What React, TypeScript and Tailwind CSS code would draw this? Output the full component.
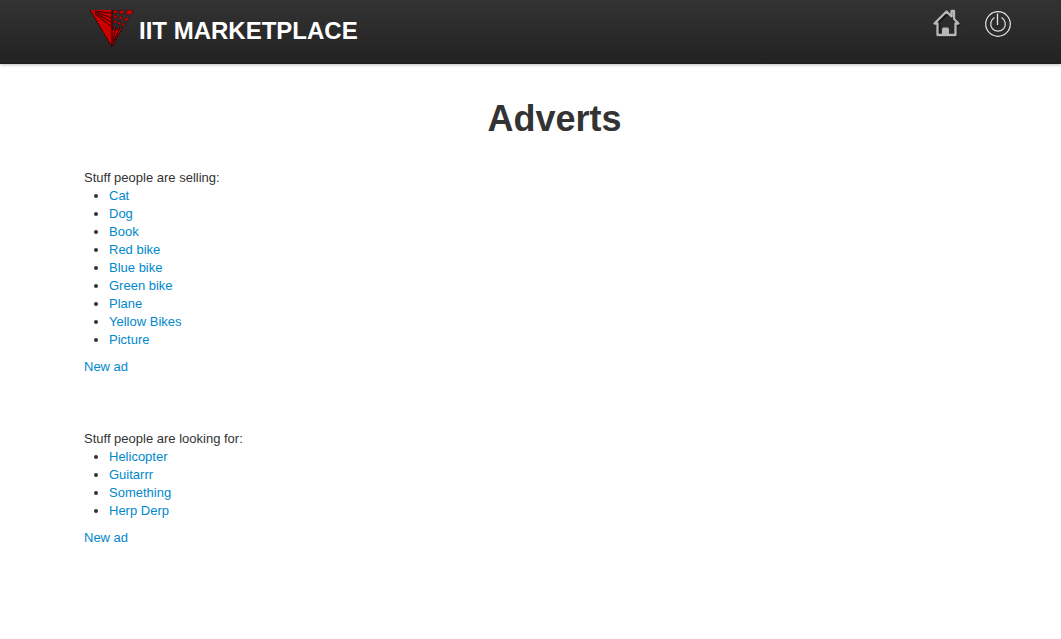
type Section = { title: string; items: string[] };

const sections: Section[] = [
  {
    title: "Stuff people are selling:",
    items: ["Cat", "Dog", "Book", "Red bike", "Blue bike", "Green bike", "Plane", "Yellow Bikes", "Picture"],
  },
  {
    title: "Stuff people are looking for:",
    items: ["Helicopter", "Guitarrr", "Something", "Herp Derp"],
  },
];

function Logo() {
  return (
    <svg width="44" height="38" viewBox="0 0 44 38" aria-hidden="true">
      <path d="M0 0H22V37Z" fill="#cc0000" />
      <path d="M22 20L30 19L32 18L22 37Z" fill="#cc0000" />
      <path d="M0 0L22 37L33 17" fill="none" stroke="#160000" strokeWidth="1" strokeDasharray="2 1" />
      <g stroke="#220000" strokeWidth="0.900" fill="none">
        <path d="M5 1L22 3.500M5 2L22 8M5 3L22 12.500M5 4L22 17" />
        <path d="M22 37V0" stroke="#4a0000" strokeWidth="1.500" />
        <path d="M23 32L25.500 18M24 31L30 18" />
      </g>
      <g fill="#d00000" stroke="#120000" strokeWidth="0.400">
        <path d="M23.500 0.300H27.500L27 3.200H23.500Z" />
        <path d="M30 0.300H34.500L33.300 3.700H29.500Z" />
        <path d="M37.500 0.300H43.500L40.500 4.700H35.700Z" />
        <path d="M24 5.300H27L26.500 8.200H24Z" />
        <path d="M29.500 6.300H32.500L31.500 9.500H28.500Z" />
        <path d="M35.500 7.800H39.300L37 11H34Z" />
        <path d="M24 10.500H26.500L26 13.500H24Z" />
        <path d="M29 11.500H31L30 14.500H28Z" />
        <path d="M33 13H35.500L33.500 16.500H31.500Z" />
        <path d="M24 16H25.500L25 19H24Z" />
        <path d="M28 17H29.500L28.500 20H27Z" />
      </g>
    </svg>
  );
}

function HomeIcon() {
  return (
    <svg width="28" height="30" viewBox="0 0 28 30" aria-hidden="true">
      <path
        d="M2 14.500L13.500 3L25 14.500H22V26H5V14.500Z"
        fill="none"
        stroke="#101010"
        strokeOpacity="0.800"
        strokeWidth="2.500"
        strokeLinejoin="round"
        transform="translate(1 1)"
      />
      <path
        d="M1.500 14.500L13.500 2.500L18.500 7.500V2H21V10L25.500 14.500H22.500V26H4.500V14.500Z"
        fill="none"
        stroke="#b8b8b8"
        strokeWidth="2.300"
        strokeLinejoin="round"
      />
      <path d="M9 26V20L10 18.500H15L16 20V26Z" fill="#b8b8b8" />
    </svg>
  );
}

function PowerIcon() {
  return (
    <svg width="26" height="26" viewBox="0 0 26 26" fill="none" stroke="#e4e4e4" aria-hidden="true">
      <circle cx="13" cy="13" r="12.300" strokeWidth="1.200" />
      <path d="M9.500 6.500A7.300 7.300 0 1 0 16.500 6.500" strokeWidth="1.200" />
      <path d="M12.500 2.500V14" strokeWidth="1.300" />
    </svg>
  );
}

function AdvertSection({ title, items }: Section) {
  return (
    <section>
      <h2>{title}</h2>
      <ul className="mb-[9px] list-disc pl-[25px]">
        {items.map((item) => (
          <li key={item}>
            <a href="#" className="text-[#0088cc] hover:underline">{item}</a>
          </li>
        ))}
      </ul>
      <a href="#" className="text-[#0088cc] hover:underline">New ad</a>
    </section>
  );
}

export default function App() {
  return (
    <div className="min-h-screen bg-white font-['Liberation_Sans',Arial,sans-serif] text-[13px] leading-[18px] text-[#333333]">
      <header className="flex h-16 items-start justify-between bg-linear-to-b from-[#333333] to-[#222222] pr-[50px] pl-[90px] shadow-[0_1px_3px_rgba(0,0,0,0.25),inset_0_-1px_0_rgba(0,0,0,0.1)]">
        <a href="#" className="flex items-start gap-[5px] pt-[10px] text-2xl font-bold text-white">
          <Logo />
          <span className="pt-[5px]">IIT MARKETPLACE</span>
        </a>
        <nav className="flex items-center gap-6 pt-[9px]">
          <a href="#" aria-label="Home"><HomeIcon /></a>
          <a href="#" aria-label="Log out"><PowerIcon /></a>
        </nav>
      </header>
      <main className="pt-[35px] pr-9 pb-9 pl-21">
        <h1 className="text-center text-4xl font-bold">Adverts</h1>
        <div className="mt-[30px] flex flex-col gap-[54px]">
          {sections.map((section) => (
            <AdvertSection key={section.title} {...section} />
          ))}
        </div>
      </main>
    </div>
  );
}
